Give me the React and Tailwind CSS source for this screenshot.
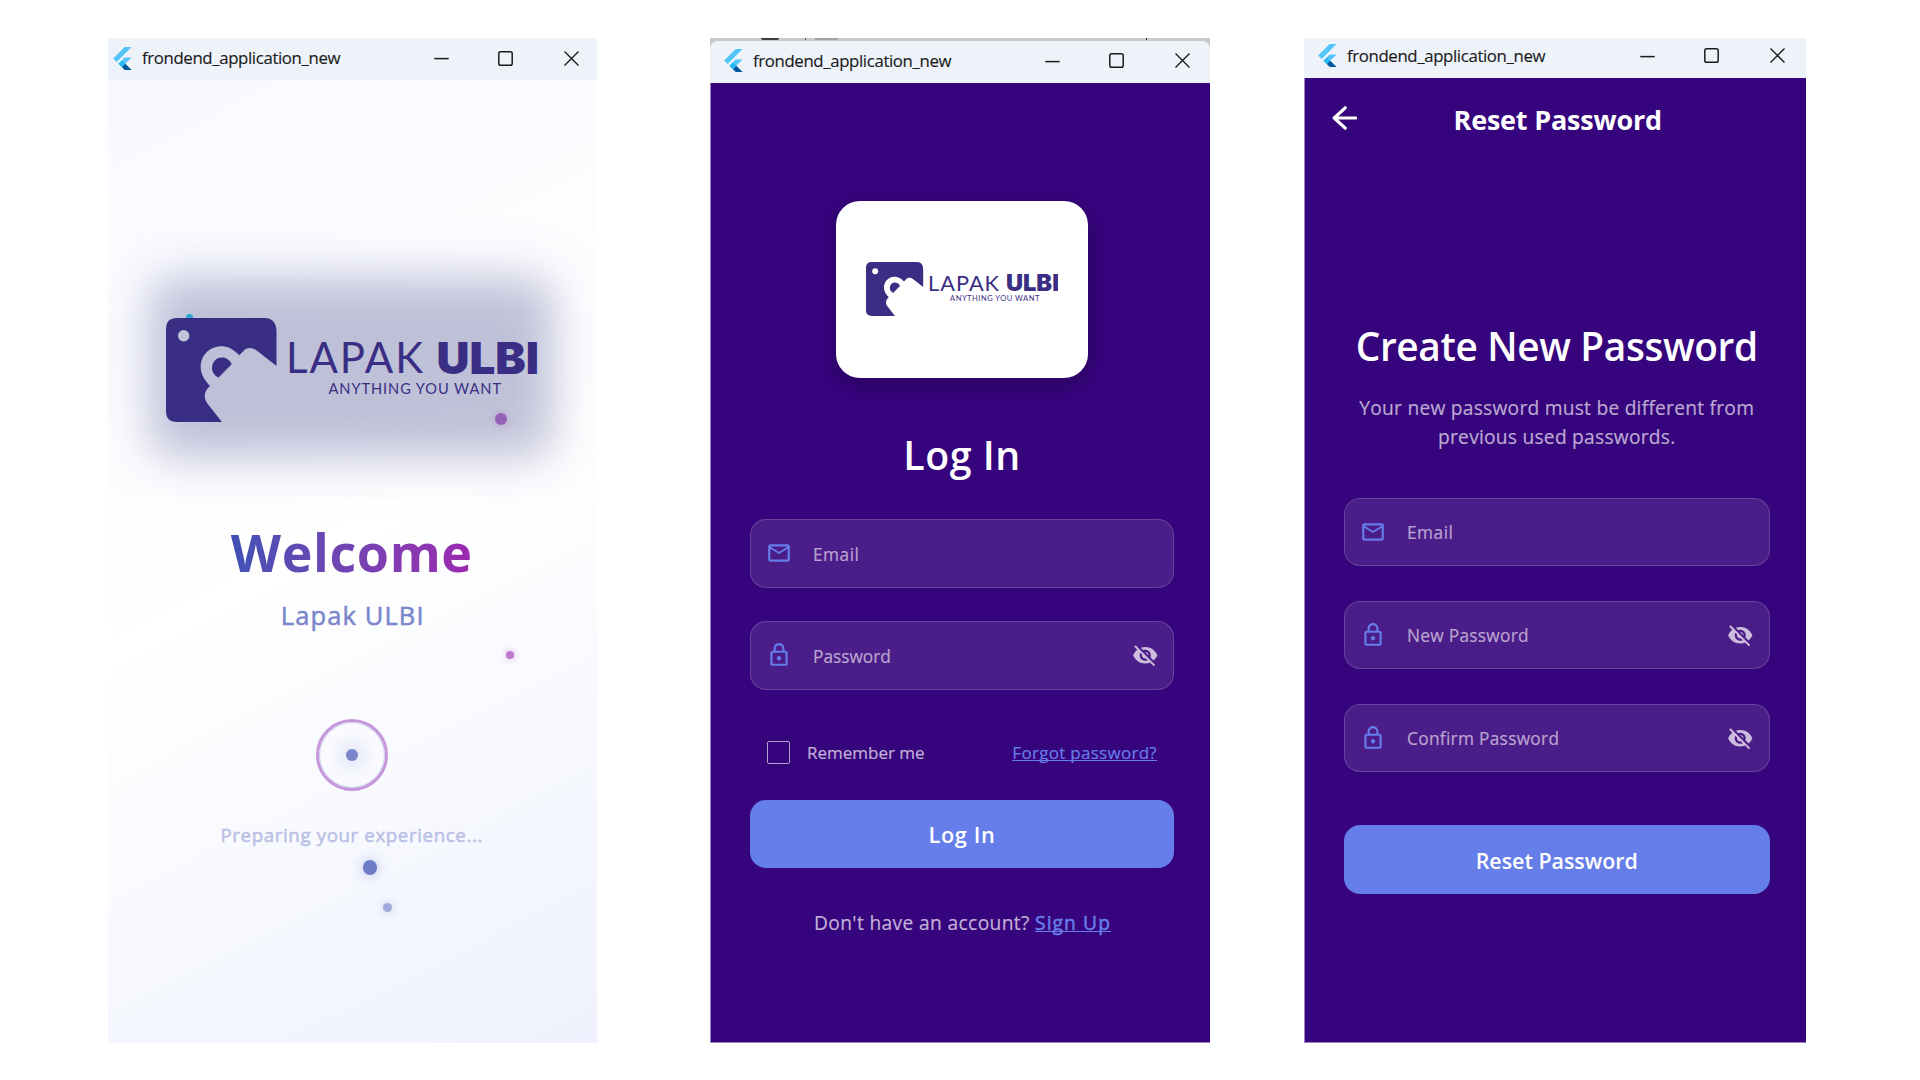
import React from "react";
import { MdMailOutline, MdLockOutline, MdVisibilityOff } from "react-icons/md";

function FlutterMark() {
  return (
    <svg width="19" height="23" viewBox="0 0 19 23" className="shrink-0">
      <path d="M11.6 0H18.6L3.6 15L0.1 11.5Z" fill="#54c5f8" />
      <path d="M11.6 10.6H18.6L12.2 16.8L15.4 20L18.6 23H11.9L5.4 16.8Z" fill="#54c5f8" />
      <path d="M8.9 20.1L12.2 16.8L18.6 23H11.9Z" fill="#01579b" />
      <path d="M5.4 16.8L8.8 13.4L12.2 16.8L8.8 20.1Z" fill="#29b6f6" />
    </svg>
  );
}

function TitleBar({ className }) {
  return (
    <div className={`flex shrink-0 items-center bg-[#eef3fa] text-[#1b1b1b] ${className}`}>
      <FlutterMark />
      <span className="ml-[10px] whitespace-nowrap text-[16.8px] leading-6 tracking-[-0.363px] [-webkit-text-stroke:0.15px_currentColor]">
        frondend_application_new
      </span>
      <div className="ml-auto flex items-center">
        <svg width="15" height="16" viewBox="0 0 15 16">
          <path d="M0.3 8.6H14.7" stroke="currentColor" strokeWidth="1.5" />
        </svg>
        <svg width="15" height="15" viewBox="0 0 15 15" className="ml-[49px]">
          <rect x="0.8" y="0.8" width="13.4" height="13.4" rx="1.8" fill="none" stroke="currentColor" strokeWidth="1.5" />
        </svg>
        <svg width="15" height="15" viewBox="0 0 15 15" className="ml-[51px]">
          <path d="M0.5 0.5L14.5 14.5M14.5 0.5L0.5 14.5" stroke="currentColor" strokeWidth="1.4" />
        </svg>
      </div>
    </div>
  );
}

function Logo({ width, height, cutout }) {
  return (
    <svg width={width} height={height} viewBox="0 0 372 104" className="shrink-0" fill="#392e84">
      <path d="M11 0H99Q110.5 0.5 110.5 14V48L90.7 32.6C87 29.5 81 29 78 32.5L73.3 37.3C66 30 61 28.3 55.7 28.3C43 28.3 34.7 38 34.7 49C34.7 56.5 38.5 62 44 68C38.5 72.5 37 79 41 85L56 104H11Q0 104 0 93V11Q0 0 11 0Z" />
      <path d="M52.3 59.7L65.7 46.2C63.5 41.5 59.5 39.6 55.7 39.6C50 39.6 46 44.5 46 50.2C46 54 48.3 57 52.3 59.7Z" />
      <circle cx="17.7" cy="17.7" r="5.7" className={cutout} />
      <text x="120" y="55.4" fontSize="42" textLength="137" fontFamily="Lato, sans-serif">LAPAK</text>
      <text x="270.5" y="56" fontSize="44.5" textLength="102.5" lengthAdjust="spacingAndGlyphs" fontFamily="Inter, Lato, sans-serif" fontWeight="900">ULBI</text>
      <text x="162.5" y="76" fontSize="14.6" textLength="172.5" fontFamily="Lato, sans-serif">ANYTHING YOU WANT</text>
    </svg>
  );
}

function Field({ icon, label, spacing, secret }) {
  return (
    <div className="flex h-[68.5px] shrink-0 items-center rounded-2xl border-[1.4px] border-white/17 bg-white/10 pl-[15px] pr-[15px]">
      {icon === "mail" ? (
        <MdMailOutline size={26} className="text-[#667eea]" />
      ) : (
        <MdLockOutline size={26} className="text-[#667eea]" />
      )}
      <span className={`ml-[21px] pt-[3px] text-[17.3px] leading-6 text-[#bba5d0] [-webkit-text-stroke:0.2px_currentColor] ${spacing}`}>{label}</span>
      {secret && <MdVisibilityOff size={26.5} className="ml-auto text-[#cdbcdd]" />}
    </div>
  );
}

function PrimaryButton({ children, className }) {
  return (
    <button className={`h-[68.5px] shrink-0 rounded-2xl bg-[#667eea] pt-[3px] font-semibold leading-7 text-white ${className}`}>
      {children}
    </button>
  );
}

function Splash() {
  return (
    <section className="ml-[108px] flex w-[489px] flex-col">
      <TitleBar className="h-[42px] pb-[2px] pl-[5px] pr-[18px]" />
      <div className="relative flex flex-1 flex-col items-center overflow-hidden bg-[linear-gradient(153deg,#f8f9ff_0%,#ffffff_48%,#eff2fe_100%)] pr-[1.5px]">
        <div className="relative mt-[200px] flex h-[176px] w-[400px] justify-center pt-[37.5px]">
          <div className="absolute -inset-1 rounded-[24px] bg-[#3f51b5]/12 blur-[30px]" />
          <div className="absolute inset-0 rounded-[20px] bg-[#30346f]/22 blur-[20px]" />
          <span className="absolute left-[34.5px] top-[33.5px] size-[6.5px] rounded-full bg-[#2fa6cd]" />
          <div className="relative">
            <Logo width="372" height="104" cutout="fill-[#c1c3db]" />
          </div>
        </div>
        <h1 className="mt-[66px] bg-linear-to-r from-[#3f51b5] to-[#9c27b0] bg-clip-text text-[52px] font-bold leading-[60px] tracking-[0.6px] text-transparent">
          Welcome
        </h1>
        <p className="mt-[17px] pl-[2px] text-[25.5px] font-medium leading-8 tracking-[1.1px] text-[#7986cb] [-webkit-text-stroke:0.5px_currentColor]">Lapak ULBI</p>
        <div className="mt-[88px] flex size-[72px] shrink-0 items-center justify-center rounded-full border-[3px] border-[#c796dc] shadow-[inset_0_0_1px_1px_#c5d0ea]">
          <span className="size-[12px] rounded-full bg-[#7986cb] shadow-[0_0_18px_5px_rgba(63,81,181,0.18)]" />
        </div>
        <p className="mt-[29.5px] whitespace-nowrap text-[18.7px] font-medium leading-7 tracking-[0.617px] text-[#b9c0e5] [-webkit-text-stroke:0.5px_currentColor]">
          Preparing your experience...
        </p>
        <span className="absolute left-[386.5px] top-[333px] size-[12px] rounded-full bg-[#9660b6] shadow-[0_0_6px_1px_rgba(156,39,176,0.2)]" />
        <span className="absolute left-[398px] top-[571px] size-[8px] rounded-full bg-[#c077d0] shadow-[0_0_6px_1px_rgba(156,39,176,0.25)]" />
        <span className="absolute left-[254.5px] top-[780px] size-[14.5px] rounded-full bg-[#6f7dc9] shadow-[0_0_12px_2px_rgba(63,81,181,0.22)]" />
        <span className="absolute left-[275px] top-[823px] size-[9px] rounded-full bg-[#9fa8da] shadow-[0_0_8px_2px_rgba(63,81,181,0.16)]" />
      </div>
    </section>
  );
}

function Login() {
  return (
    <section className="ml-[113px] flex w-[500px] flex-col">
      <div className="flex h-[3px] shrink-0 items-start bg-[#c9c9cc]">
        <span className="ml-[51px] h-[2px] w-[18px] rounded-b-full bg-[#3d3d3f]" />
        <span className="ml-[26px] h-[2px] w-[1px] bg-[#555]" />
        <span className="ml-[9px] h-[2px] w-[23px] bg-[#a2a2a4]" />
        <span className="ml-[308px] h-[2px] w-[1px] bg-[#333]" />
      </div>
      <div className="flex shrink-0 bg-[#c9c9cc]">
        <TitleBar className="h-[42px] flex-1 rounded-t-lg pb-[3px] pl-[14px] pr-[20.5px]" />
      </div>
      <div className="flex flex-1 flex-col border-b border-l border-[#9b82be] bg-[#36047c] pl-[39px] pr-[36px]">
        <div className="mt-[118px] flex h-[177px] w-[252px] shrink-0 items-center justify-center self-center rounded-3xl bg-white pb-[1px] shadow-[0_6px_16px_2px_rgba(0,0,0,0.2)]">
          <Logo width="192.5" height="54" cutout="fill-white" />
        </div>
        <h2 className="mt-[51px] text-center text-[39.3px] font-semibold leading-[52px] tracking-[0.5px] text-white">Log In</h2>
        <div className="mt-[38px] flex flex-col gap-[33.5px]">
          <Field icon="mail" label="Email" spacing="tracking-[0.48px]" />
          <Field icon="lock" label="Password" spacing="tracking-normal" secret />
        </div>
        <div className="mt-[51px] flex h-6 shrink-0 items-center justify-between px-[17px]">
          <label className="flex items-center">
            <span className="size-[23px] rounded-[2px] border-[1.6px] border-[#b49fcd]" />
            <span className="ml-[17px] pt-[1px] text-[17px] leading-6 text-[#c2b1d7] [-webkit-text-stroke:0.2px_currentColor]">Remember me</span>
          </label>
          <a className="pt-[1px] text-[17px] leading-6 tracking-[0.288px] text-[#667eea] underline decoration-1 underline-offset-1 [-webkit-text-stroke:0.2px_currentColor] [text-decoration-skip-ink:none]">
            Forgot password?
          </a>
        </div>
        <PrimaryButton className="mt-[35px] text-[21.7px] tracking-[0.64px]">Log In</PrimaryButton>
        <p className="mt-[41px] pl-[1px] text-center text-[19.2px] leading-7 tracking-[0.362px] text-[#c2b1d7] [-webkit-text-stroke:0.2px_currentColor]">
          Don't have an account?{" "}
          <a className="font-medium tracking-[1.1px] text-[#667eea] underline decoration-1 underline-offset-1 [-webkit-text-stroke:0.5px_currentColor] [text-decoration-skip-ink:none]">Sign Up</a>
        </p>
      </div>
    </section>
  );
}

function ResetPassword() {
  return (
    <section className="ml-[94px] flex w-[502px] flex-col">
      <TitleBar className="h-[39.5px] pb-[4px] pl-[14px] pr-[21px]" />
      <div className="flex flex-1 flex-col border-b border-l border-[#9b82be] bg-[#36047c] pl-[39px] pr-[36.5px]">
        <div className="-ml-[12px] mt-[24.5px] flex items-start">
          <svg width="25" height="24" viewBox="0 0 25 24" className="mt-[4px]" fill="none" stroke="white" strokeWidth="3.2" strokeLinecap="round" strokeLinejoin="round">
            <path d="M13.2 1.8L2.2 12L13.2 22.2M2.2 12H23.6" />
          </svg>
          <span className="ml-[96.5px] whitespace-nowrap text-[27px] font-bold leading-9 tracking-[-0.198px] text-white">Reset Password</span>
        </div>
        <h2 className="mt-[181.5px] whitespace-nowrap text-center text-[38.8px] font-semibold leading-[52px] tracking-[-0.35px] text-white">
          Create New Password
        </h2>
        <p className="mt-[22.5px] text-center text-[19.2px] leading-[28.6px] tracking-[0.245px] text-[#bba9d2] [-webkit-text-stroke:0.2px_currentColor]">
          Your new password must be different from
          <br />
          previous used passwords.
        </p>
        <div className="mt-[46.5px] flex flex-col gap-[34.5px]">
          <Field icon="mail" label="Email" spacing="tracking-[0.48px]" />
          <Field icon="lock" label="New Password" spacing="tracking-[0.28px]" secret />
          <Field icon="lock" label="Confirm Password" spacing="tracking-[0.3px]" secret />
        </div>
        <PrimaryButton className="mt-[53px] text-[21.4px] tracking-normal">Reset Password</PrimaryButton>
      </div>
    </section>
  );
}

export default function App() {
  return (
    <main className="h-[1080px] w-[1920px] overflow-hidden bg-white pt-[38px] font-['Open_Sans','Noto_Sans',sans-serif]">
      <div className="flex h-[1004.5px]">
        <Splash />
        <Login />
        <ResetPassword />
      </div>
    </main>
  );
}
